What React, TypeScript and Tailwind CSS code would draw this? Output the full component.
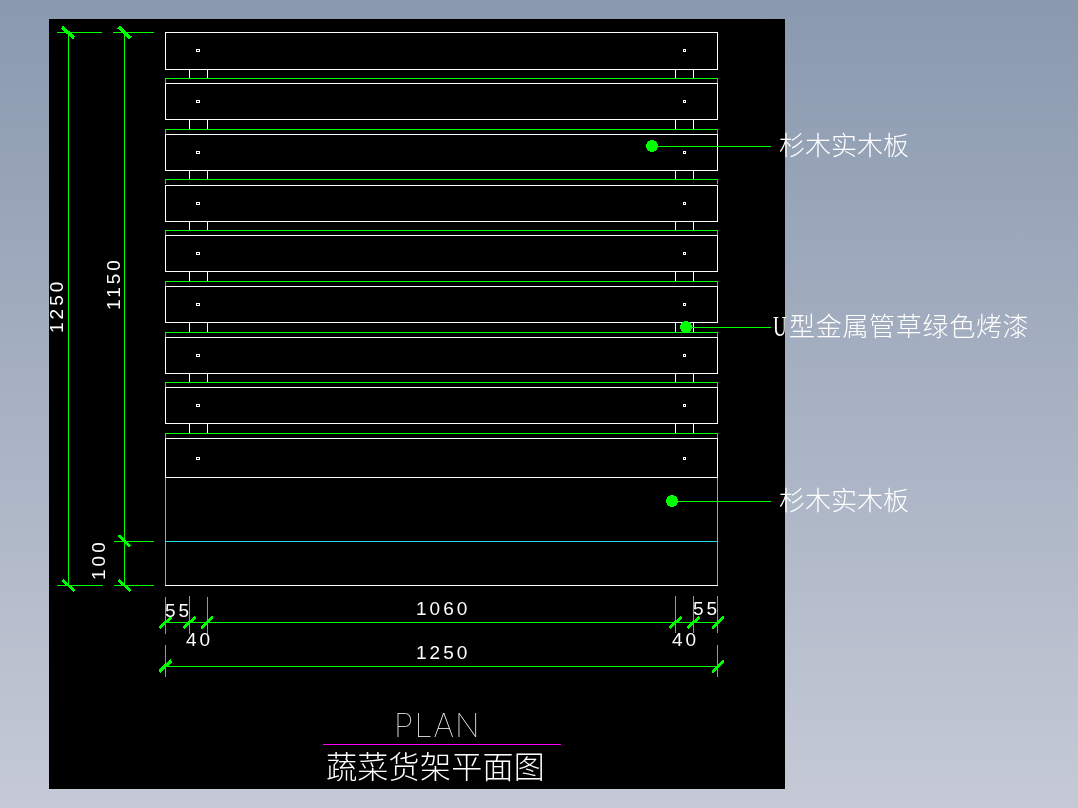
const boardTops = [32, 83, 134, 185, 235, 286, 337, 387, 438];
const boardBottoms = [69, 119, 170, 221, 271, 322, 373, 423, 477];
const greenLines = [78, 129, 179, 230, 281, 332, 382, 433];
const holeYs = [50, 101, 152, 203, 253, 304, 355, 405, 458];

const GREEN = '#00ff00';
const CYAN = '#1fdde6';

const Tick = ({ x, y, dir, heavy }: { x: number; y: number; dir: 'back' | 'fwd'; heavy?: boolean }) => {
  const dy = dir === 'back' ? 5.5 : -5.5;
  return (
    <line
      x1={x - 6}
      y1={y - dy}
      x2={x + 6}
      y2={y + dy}
      stroke={GREEN}
      strokeWidth={heavy ? 3.6 : 2.8}
      shapeRendering="crispEdges"
    />
  );
};

const dimLines: number[][] = [
  // vertical dims
  [68.5, 32, 68.5, 585],
  [124.5, 32, 124.5, 585],
  [57, 32.5, 102, 32.5],
  [113, 32.5, 154, 32.5],
  [114, 541.5, 154, 541.5],
  [57, 585.5, 103, 585.5],
  [114, 585.5, 154, 585.5],
  // horizontal dims
  [165, 622.5, 718, 622.5],
  [165, 666.5, 718, 666.5],
  [165.5, 597, 165.5, 634],
  [189.5, 596, 189.5, 634],
  [207.5, 597, 207.5, 634],
  [165.5, 645, 165.5, 677],
  [675.5, 596, 675.5, 633],
  [693.5, 596, 693.5, 633],
  [717.5, 596, 717.5, 633],
  [717.5, 645, 717.5, 677],
  // leaders
  [652, 146.5, 771, 146.5],
  [686, 327.5, 771, 327.5],
  [672, 501.5, 771, 501.5],
];

const dimText = 'fill-white text-[19px] tracking-[3px] font-["Liberation_Sans",sans-serif]';
const cjkText = 'fill-white font-light font-["Liberation_Serif","Noto_Sans_CJK_SC",serif]';

const Plan = () => (
  <svg className="absolute left-0 top-0 will-change-transform" width={1078} height={808} viewBox="0 0 1078 808" fill="none">
    {/* boards */}
    {boardTops.map((top, i) => (
      <rect key={top} x={165.5} y={top + 0.5} width={552} height={boardBottoms[i] - top} stroke="#ffffff" shapeRendering="crispEdges" />
    ))}
    {/* tubes between the boards */}
    {greenLines.map((y, i) =>
      [189.5, 207.5, 675.5, 693.5].map((x) => (
        <line key={`${y}-${x}`} x1={x} y1={boardBottoms[i]} x2={x} y2={y} stroke="#ffffff" shapeRendering="crispEdges" />
      )),
    )}
    {greenLines.map((y) => (
      <path key={y} d={`M165.5 ${y + 5}V${y + 0.5}H717.5V${y + 5}`} stroke={GREEN} shapeRendering="crispEdges" />
    ))}
    {holeYs.map((y) => (
      <g key={y} stroke="#ffffff" shapeRendering="crispEdges">
        <circle cx={198} cy={y + 0.5} r={1.5} />
        <rect x={683.5} y={y - 0.5} width={2} height={2} />
      </g>
    ))}
    {/* base */}
    <path d="M165.5 478V585.5M717.5 478V585.5" stroke={CYAN} shapeRendering="crispEdges" />
    <line x1={165} y1={541.5} x2={718} y2={541.5} stroke={CYAN} shapeRendering="crispEdges" />
    <line x1={165} y1={585.5} x2={718} y2={585.5} stroke="#ffffff" shapeRendering="crispEdges" />
    {/* dimensions */}
    {dimLines.map(([x1, y1, x2, y2]) => (
      <line key={`${x1}-${y1}-${x2}-${y2}`} x1={x1} y1={y1} x2={x2} y2={y2} stroke={GREEN} shapeRendering="crispEdges" />
    ))}
    <Tick x={68} y={32.5} dir="back" heavy />
    <Tick x={124.5} y={32.5} dir="back" heavy />
    <Tick x={124.5} y={541} dir="back" />
    <Tick x={68.5} y={585.5} dir="back" />
    <Tick x={124.5} y={585.5} dir="back" />
    {[165.5, 189.5, 207, 675.5, 693.5, 718].map((x) => (
      <Tick key={x} x={x} y={622.5} dir="fwd" />
    ))}
    <Tick x={165.5} y={666} dir="fwd" heavy />
    <Tick x={718} y={666.5} dir="fwd" />
    {/* leader dots */}
    <circle cx={652} cy={146} r={6} fill={GREEN} shapeRendering="crispEdges" />
    <circle cx={686} cy={327} r={6} fill={GREEN} shapeRendering="crispEdges" />
    <circle cx={672} cy={501} r={6} fill={GREEN} shapeRendering="crispEdges" />
    <line x1={323} y1={744.5} x2={561} y2={744.5} stroke="#ff00ff" shapeRendering="crispEdges" />

    {/* dimension values */}
    <text className={dimText} transform="rotate(-90 63 333)" x={63} y={333}>1250</text>
    <text className={dimText} transform="rotate(-90 120 310)" x={120} y={310}>1150</text>
    <text className={dimText} transform="rotate(-90 105 580)" x={105} y={580}>100</text>
    <text className={dimText} x={165} y={617}>55</text>
    <text className={dimText} x={416} y={615}>1060</text>
    <text className={dimText} x={693} y={615}>55</text>
    <text className={dimText} x={186} y={646}>40</text>
    <text className={dimText} x={672} y={646}>40</text>
    <text className={dimText} x={416} y={659}>1250</text>

    {/* title */}
    <text className='fill-white text-[32px] font-thin tracking-[1px] font-["Inter",sans-serif]' x={394} y={737}>PLAN</text>
    <text className={`${cjkText} text-[31px] tracking-[0.3px]`} x={326} y={778}>蔬菜货架平面图</text>

    {/* callouts */}
    <text className={`${cjkText} text-[26px]`} x={779} y={155}>杉木实木板</text>
    <text className={`${cjkText} text-[28px]`} transform="translate(773 336) scale(0.68 1.05)">U</text>
    <text className={`${cjkText} text-[26px] tracking-[0.7px]`} x={789} y={336}>型金属管草绿色烤漆</text>
    <text className={`${cjkText} text-[26px]`} x={779} y={510}>杉木实木板</text>
  </svg>
);

export default function App() {
  return (
    <div className="relative w-[1078px] h-[808px] overflow-hidden pl-[49px] pt-[19px] bg-gradient-to-b from-[#8a99af] to-[#c5cad6]">
      <div className="w-[736px] h-[770px] bg-black" />
      <Plan />
    </div>
  );
}
